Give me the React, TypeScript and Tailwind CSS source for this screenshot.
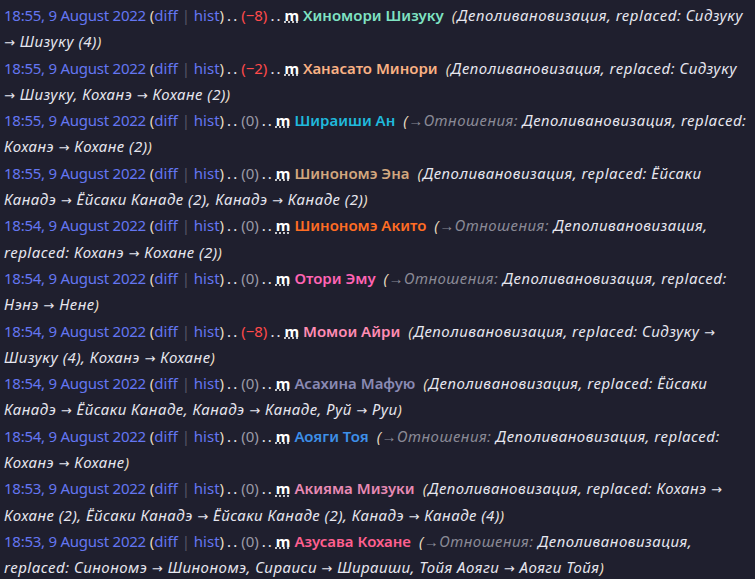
import { Fragment } from "react";

type Entry = {
  time: string;
  size: number;
  name: string;
  color: string;
  section?: boolean;
  head: string;
  tail: string;
};

const entries: Entry[] = [
  { time: "18:55", size: -8, name: "Хиномори Шизуку", color: "text-[#7fe3c3]", head: "Деполивановизация, replaced: Сидзуку", tail: "→ Шизуку (4))" },
  { time: "18:55", size: -2, name: "Ханасато Минори", color: "text-[#f9b184]", head: "Деполивановизация, replaced: Сидзуку", tail: "→ Шизуку, Коханэ → Кохане (2))" },
  { time: "18:55", size: 0, name: "Шираиши Ан", color: "text-[#20b9dc]", section: true, head: "Деполивановизация, replaced:", tail: "Коханэ → Кохане (2))" },
  { time: "18:55", size: 0, name: "Шинономэ Эна", color: "text-[#d2a77e]", head: "Деполивановизация, replaced: Ёйсаки", tail: "Канадэ → Ёйсаки Канаде (2), Канадэ → Канаде (2))" },
  { time: "18:54", size: 0, name: "Шинономэ Акито", color: "text-[#ff6d24]", section: true, head: "Деполивановизация,", tail: "replaced: Коханэ → Кохане (2))" },
  { time: "18:54", size: 0, name: "Отори Эму", color: "text-[#ff64b4]", section: true, head: "Деполивановизация, replaced:", tail: "Нэнэ → Нене)" },
  { time: "18:54", size: -8, name: "Момои Айри", color: "text-[#ff8cb4]", head: "Деполивановизация, replaced: Сидзуку →", tail: "Шизуку (4), Коханэ → Кохане)" },
  { time: "18:54", size: 0, name: "Асахина Мафую", color: "text-[#8a8ab4]", head: "Деполивановизация, replaced: Ёйсаки", tail: "Канадэ → Ёйсаки Канаде, Канадэ → Канаде, Руй → Руи)" },
  { time: "18:54", size: 0, name: "Аояги Тоя", color: "text-[#3d8fe8]", section: true, head: "Деполивановизация, replaced:", tail: "Коханэ → Кохане)" },
  { time: "18:53", size: 0, name: "Акияма Мизуки", color: "text-[#e88ab4]", head: "Деполивановизация, replaced: Коханэ →", tail: "Кохане (2), Ёйсаки Канадэ → Ёйсаки Канаде (2), Канадэ → Канаде (4))" },
  { time: "18:53", size: 0, name: "Азусава Кохане", color: "text-[#ff5f8f]", section: true, head: "Деполивановизация,", tail: "replaced: Синономэ → Шинономэ, Сираиси → Шираиши, Тойя Аояги → Аояги Тойя)" },
];

// the summary arrows are heavier than Noto's, so swap the font for them
function Summary({ text }: { text: string }) {
  const parts = text.split("→");
  return (
    <>
      {parts.map((p, i) => (
        <Fragment key={i}>
          {i > 0 ? (
            <span className="font-['DejaVu_Sans',sans-serif] text-[13px] leading-none not-italic">→</span>
          ) : null}
          {p}
        </Fragment>
      ))}
    </>
  );
}

function SizeDiff({ size }: { size: number }) {
  if (size < 0) return <span className="text-[#ff4a4a]">({"\u2212" + Math.abs(size)})</span>;
  return <span className="text-[#9a9aa6]">({size})</span>;
}

function Dots() {
  return (
    <span className="pr-[4px] pl-[3px]">
      .<span className="pl-[2px]">.</span>
    </span>
  );
}

export default function App() {
  return (
    <div className="min-h-screen bg-[#1f1f2e] px-1 pt-[2px] font-['Noto_Sans',sans-serif] text-[15px] leading-[26.3px] text-[#e6e6ee]">
      <ul>
        {entries.map((e, i) => (
          <li key={i} className="h-[52.6px] whitespace-nowrap">
            <span className="tracking-[-0.25px] text-[#6476f2]">{e.time}, 9 August 2022</span>{" "}
            <span className="text-[#e8dcc0]">(</span>
            <span className="text-[#6476f2]">diff</span>
            <span className="text-[#555566]"> | </span>
            <span className="text-[#6476f2]">hist</span>
            <span className="text-[#e8dcc0]">)</span>
            <Dots />
            <SizeDiff size={e.size} />
            <Dots />
            <abbr className="font-bold text-white underline decoration-dotted" title="This is a minor edit">
              m
            </abbr>{" "}
            <span className={`font-semibold ${e.color}`}>{e.name}</span>
            <span className="ml-2 italic tracking-[0.5px]">
              <span className="text-[#e8dcc0]">(</span>
              {e.section ? (
                <span className="text-[#8a8a96]">→Отношения: </span>
              ) : null}
              <Summary text={e.head} />
            </span>
            <br />
            <span className="italic tracking-[0.5px]">
              <Summary text={e.tail.slice(0, -1)} />
              <span className="text-[#e8dcc0]">)</span>
            </span>
          </li>
        ))}
      </ul>
    </div>
  );
}
